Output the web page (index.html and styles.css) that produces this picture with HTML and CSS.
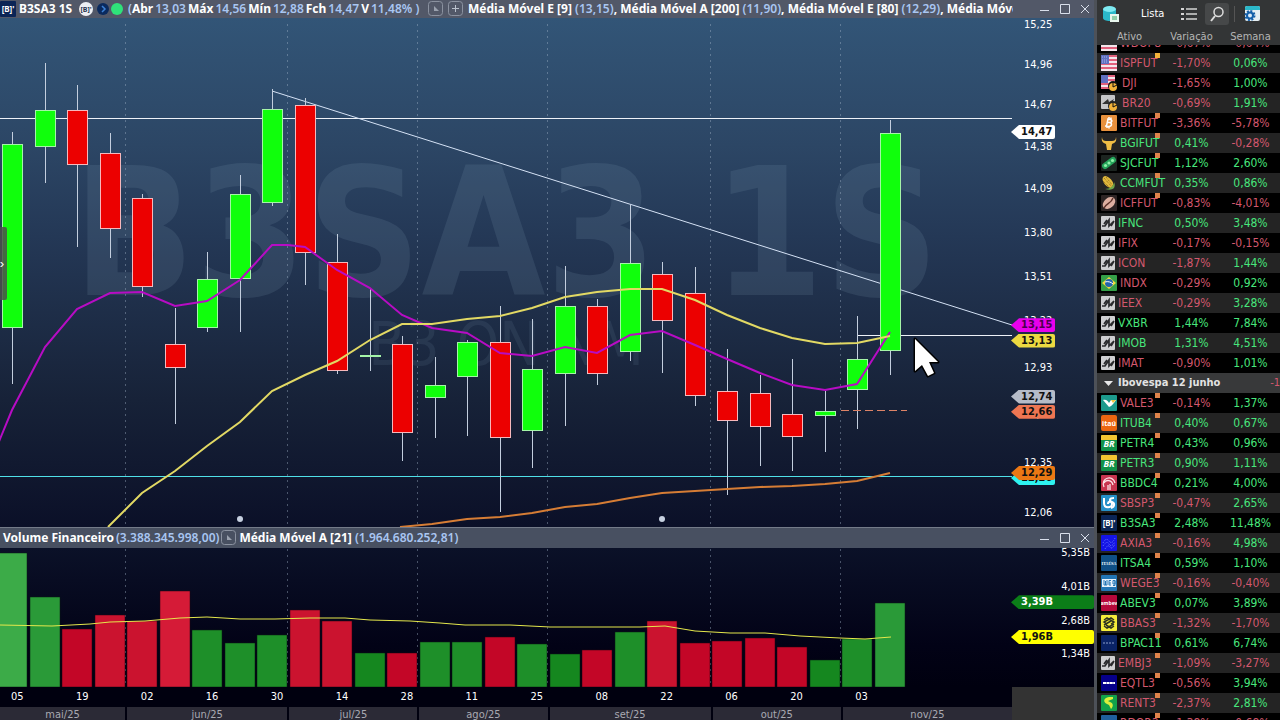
FILE: index.html
```
<!DOCTYPE html>
<html lang="pt-BR">
<head>
    <meta charset="UTF-8">
    <meta name="viewport" content="width=device-width, initial-scale=1.0">
    <title>B3SA3 1S</title>
    <link rel="stylesheet" href="styles.css">
</head>

<body>
    <!-- Ícones dos ativos -->
    <svg class="icon-defs" aria-hidden="true">
        <symbol id="i-usa" viewBox="0 0 16 16"><rect width="16" height="16" fill="#f3e6ec"/><path d="M0 1h16M0 5h16M0 9h16M0 13h16" stroke="#e0607c" stroke-width="2"/><rect width="8" height="9" fill="#5f6fc0"/><path d="M1 2h6M1 5h6M1 7h6" stroke="#a9b5ea" stroke-dasharray="1 1"/></symbol>
        <symbol id="i-dji" viewBox="0 0 16 16"><rect width="14" height="14" fill="#f3e6ec"/><path d="M0 1h14M0 5h14M0 9h14M0 13h14" stroke="#e0607c" stroke-width="2"/><rect width="7" height="8" fill="#5f6fc0"/><circle cx="12" cy="11" r="5" fill="#111"/><circle cx="12" cy="12" r="4" fill="#f2b23a"/><path d="M12 8v4l4-2" stroke="#111" fill="none"/></symbol>
        <symbol id="i-br20" viewBox="0 0 16 16"><rect width="14" height="14" rx="1" fill="#c6c6c8"/><path d="M1 9l6-5 1 3 5-3-3 6-3-1z" fill="#333"/><circle cx="12" cy="11" r="5" fill="#222"/><circle cx="12" cy="12" r="4" fill="#f2b23a"/><path d="M12 8v4l4-2" stroke="#111" fill="none"/></symbol>
        <symbol id="i-bit" viewBox="0 0 16 16"><rect width="16" height="16" rx="1" fill="#e8913d"/><path d="M6 4l3 .5c3 .5 2 3-.5 3 3 .5 2.500 4-.5 4l-4-.5M7 4L5.500 11M6 7.500h3M8 2v2M10 2.500v2M6 11v2M8 11.500v2" stroke="#fff" stroke-width="1.500" fill="none"/></symbol>
        <symbol id="i-bgi" viewBox="0 0 16 16"><path d="M1 2c0 3 2 4 4 4h6c2 0 4-1 4-4 1 4-1 6-4 7l-1 6H6L5 9C2 8 0 6 1 2z" fill="#f0bd45"/></symbol>
        <symbol id="i-sjc" viewBox="0 0 16 16"><rect width="16" height="16" rx="1" fill="#1c2420"/><path d="M4 11L12 5" stroke="#25a35a" stroke-width="6" stroke-linecap="round"/><circle cx="4.500" cy="10.500" r="1.600" fill="#8ff0a8"/><circle cx="8" cy="8" r="1.600" fill="#8ff0a8"/><circle cx="11.500" cy="5.500" r="1.600" fill="#8ff0a8"/></symbol>
        <symbol id="i-ccm" viewBox="0 0 16 16"><ellipse cx="7" cy="7" rx="4" ry="7" transform="rotate(-40 7 7)" fill="#e2b93c"/><path d="M3 3l8 9M5 2l7 9M2 6l7 7" stroke="#8a6a1a" stroke-dasharray="1 1"/><path d="M4 14c4 1 7 1 9-1 1-2 1-4 0-6 0 4-4 7-9 7z" fill="#6fa64a"/></symbol>
        <symbol id="i-icf" viewBox="0 0 16 16"><rect width="16" height="16" rx="1" fill="#2d2424"/><ellipse cx="8" cy="8" rx="7" ry="5" transform="rotate(-40 8 8)" fill="#dcaea0"/><path d="M3 13c2-5 7-4 9-10" stroke="#5b3028" stroke-width="1.400" fill="none"/></symbol>
        <symbol id="i-nel" viewBox="0 0 16 16"><rect y="1" width="14" height="14" rx="1" fill="#cfcfd1"/><path d="M1 11h3L8 5v6l5-5M6 5L3 9M10 11l3-5" stroke="#2b2b2d" stroke-width="1.700" fill="none"/></symbol>
        <symbol id="i-bra" viewBox="0 0 16 16"><rect width="16" height="16" rx="1" fill="#35a048"/><path d="M8 2l7 6-7 6-7-6z" fill="#f2dc3d"/><circle cx="8" cy="8" r="4" fill="#2464ad"/><path d="M4 7c3-1 6 0 8 2" stroke="#fff" fill="none"/></symbol>
        <symbol id="i-vale" viewBox="0 0 16 16"><rect width="16" height="16" rx="1" fill="#1c9a8c"/><path d="M2 5c3-1 5 1 6 3l2-3h5c-2 3-4 6-7 7z" fill="#fff"/><path d="M10 5h5l-3 3z" fill="#f0c53f"/></symbol>
        <symbol id="i-itau" viewBox="0 0 16 16"><rect width="16" height="16" rx="2" fill="#ec6611"/><text x="8" y="11" class="logo-text" font-size="7">itaú</text></symbol>
        <symbol id="i-petr" viewBox="0 0 16 16"><rect width="16" height="16" rx="1" fill="#12924a"/><path d="M0 1q0-1 1-1h14q1 0 1 1v4H0z" fill="#f4c431"/><text x="8" y="12" class="logo-text" font-size="9" font-style="italic">BR</text></symbol>
        <symbol id="i-bbdc" viewBox="0 0 16 16"><rect width="16" height="16" rx="1" fill="#c8344f"/><path d="M3 12C-1 3 12-1 14 8M3 8c2-4 8-3 9 2M7 10v5M9 9v6" stroke="#fbe3e7" stroke-width="1.300" fill="none"/></symbol>
        <symbol id="i-sbsp" viewBox="0 0 16 16"><rect width="16" height="16" rx="1" fill="#2590c8"/><path d="M3 3v5c0 6 8 5 8 1 0-3-4-3-4 0M13 3c-5 0-5 3-2 4s3 5-1 6" stroke="#fff" stroke-width="2" fill="none"/></symbol>
        <symbol id="i-b3" viewBox="0 0 16 16"><rect width="16" height="16" rx="1" fill="#0b2556"/><text x="8" y="11" class="logo-text" font-size="8">[B]'</text></symbol>
        <symbol id="i-axia" viewBox="0 0 16 16"><rect width="16" height="16" rx="1" fill="#1414e6"/><path d="M2 8q3-6 6-2t6-3M2 11q4-6 6-2t6-2M4 14q3-5 5-2t5-3" stroke="#6c7bff" stroke-dasharray="1 1" fill="none"/></symbol>
        <symbol id="i-itsa" viewBox="0 0 16 16"><rect width="16" height="16" rx="1" fill="#0f4f86"/><text x="8" y="10" class="logo-text logo-serif" font-size="4">ITAÚSA</text></symbol>
        <symbol id="i-weg" viewBox="0 0 16 16"><rect width="16" height="16" rx="1" fill="#2276b5"/><rect x="1" y="4" width="14" height="8" fill="#e6f2fb"/><path d="M3 5v5h3V5M4.500 6v4M10 5.500H8v4.500h2M8 8h2M14 5.500h-2V9h2V5.500v5h-2" stroke="#2276b5" fill="none"/></symbol>
        <symbol id="i-ambev" viewBox="0 0 16 16"><rect width="16" height="16" rx="1" fill="#b5083a"/><text x="8" y="10" class="logo-text" font-size="5">ambev</text></symbol>
        <symbol id="i-bb" viewBox="0 0 16 16"><rect width="16" height="16" rx="1" fill="#f4ec3a"/><path d="M3 5l3-2 7 4-3 2M13 5l-3-2-7 4 3 2M3 10l7-4M3 11l3 2 7-4M13 11l-3 2-5-3" stroke="#2e3320" stroke-width="1.500" fill="none"/></symbol>
        <symbol id="i-btg" viewBox="0 0 16 16"><rect width="16" height="16" rx="1" fill="#0a2366"/><path d="M2 8h12" stroke="#8b9fcb" stroke-dasharray="2 1"/></symbol>
        <symbol id="i-eqtl" viewBox="0 0 16 16"><rect width="16" height="16" rx="1" fill="#06008a"/><path d="M2 8h12" stroke="#fff" stroke-width="2" stroke-dasharray="3 .4"/></symbol>
        <symbol id="i-rent" viewBox="0 0 16 16"><rect width="16" height="16" rx="1" fill="#11a24a"/><path d="M12 2H8C2 3 2 7 6 9l2 1 2 4c3-3 2-6-1-7L7 6l5-2z" fill="#d9ee3c"/></symbol>
        <symbol id="i-rdor" viewBox="0 0 16 16"><rect width="16" height="16" rx="1" fill="#1f5f9c"/></symbol>
        <symbol id="i-min" viewBox="0 0 12 12"><path d="M1 7.500h9" stroke="#d9dfeb"/></symbol>
        <symbol id="i-max" viewBox="0 0 12 12"><path d="M1.500 1.500h9v9h-9z" stroke="#d9dfeb" fill="none"/></symbol>
        <symbol id="i-close" viewBox="0 0 12 12"><path d="M2 2l8 8M10 2l-8 8" stroke="#d9dfeb"/></symbol>
        <symbol id="i-corner" viewBox="0 0 16 16"><rect x=".5" y=".5" width="14" height="14" rx="3" stroke="#8b92a0" fill="none"/><path d="M6 5v5h5z" fill="#9aa1ae"/></symbol>
        <symbol id="i-plus" viewBox="0 0 16 16"><rect x=".5" y=".5" width="14" height="14" rx="3" stroke="#8b92a0" fill="none"/><path d="M4 7.500h7M7.500 4v7" stroke="#b9c0cc"/></symbol>
    </svg>

    <div class="app">
        <main class="chart">
            <!-- Título do gráfico de preços -->
            <header class="pane-title">
                <svg class="icon"><use href="#i-b3"/></svg>
                <strong class="symbol-name">B3SA3 1S</strong>
                <svg class="badges" viewBox="0 0 46 16" aria-hidden="true">
                    <circle cx="8" cy="8" r="7" fill="#eceff3"/><text x="8" y="11" class="logo-text logo-dark" font-size="7">[B]'</text>
                    <circle cx="25" cy="8" r="6" fill="#0a2a5e"/><path d="M24 5l3 3-3 3" stroke="#3d82d6" stroke-width="1.500" fill="none"/>
                    <circle cx="39" cy="8" r="6" fill="#2fe27a"/>
                </svg>
                <div class="ohlc"><span><i>(</i><b>Abr</b></span><i>13,03</i><b>Máx</b><i>14,56</i><b>Mín</b><i>12,88</i><b>Fch</b><i>14,47</i><b>V</b><i>11,48% )</i></div>
                <button class="mini" aria-label="Ocultar"><svg><use href="#i-corner"/></svg></button>
                <button class="mini" aria-label="Adicionar"><svg><use href="#i-plus"/></svg></button>
                <span class="studies"><b>Média Móvel E [9]</b> <i>(13,15)</i><b>, Média Móvel A [200]</b> <i>(11,90)</i><b>, Média Móvel E [80]</b> <i>(12,29)</i><b>, Média Móvel E [21]</b></span>
                <div class="window-buttons">
                    <button aria-label="Minimizar"><svg><use href="#i-min"/></svg></button>
                    <button aria-label="Maximizar"><svg><use href="#i-max"/></svg></button>
                    <button aria-label="Fechar"><svg><use href="#i-close"/></svg></button>
                </div>
            </header>

            <!-- Preços -->
            <section class="price-pane">
                <div class="plot">
                    <div class="watermark"><span class="wm-code">B3SA3 1S</span><span class="wm-name">B3 ON NM</span></div>
                    <svg class="drawing" viewBox="0 18 1012 509" preserveAspectRatio="none">
                        <path class="grid-line" d="M125.500 24V525M287.500 24V525M417.500 24V525M547.500 24V525M710.500 24V525M840.500 24V525"/>
                        <path class="level" d="M0 118.500H1012M857 335.500H1012"/>
                        <path class="trend" d="M272 91L1012 325"/>
                        <path class="support" d="M0 476.500H1012"/>
                        <path class="wick" d="M12.500 132V384M45.500 63V183M77.500 85V247M110.500 133V258M142.500 194V297M175.500 308V424M207.500 252V332M240.500 175V332M272.500 89V206M305.500 98V285M337.500 234V374M370.500 288V371M402.500 336V461M435.500 357V438M467.500 340V436M500.500 306V512M532.500 319V468M565.500 266V426M597.500 299V385M630.500 205V361M662.500 262V373M695.500 267V406M727.500 349V495M760.500 375V466M792.500 359V471M825.500 391V452M857.500 316V429M890.500 120V375"/>
                        <g class="up">
                            <rect x="2.500" y="144.500" width="20" height="183"/>
                            <rect x="35.500" y="110.500" width="20" height="36"/>
                            <rect x="197.500" y="279.500" width="20" height="48"/>
                            <rect x="230.500" y="194.500" width="20" height="84"/>
                            <rect x="262.500" y="109.500" width="20" height="93"/>
                            <rect x="360.500" y="355.500" width="20" height="1"/>
                            <rect x="425.500" y="385.500" width="20" height="12"/>
                            <rect x="457.500" y="342.500" width="20" height="34"/>
                            <rect x="522.500" y="369.500" width="20" height="61"/>
                            <rect x="555.500" y="306.500" width="20" height="67"/>
                            <rect x="620.500" y="263.500" width="20" height="88"/>
                            <rect x="815.500" y="411.500" width="20" height="4"/>
                            <rect x="847.500" y="359.500" width="20" height="30"/>
                            <rect x="880.500" y="133.500" width="20" height="217"/>
                        </g>
                        <g class="down">
                            <rect x="67.500" y="110.500" width="20" height="54"/>
                            <rect x="100.500" y="153.500" width="20" height="75"/>
                            <rect x="132.500" y="198.500" width="20" height="88"/>
                            <rect x="165.500" y="344.500" width="20" height="23"/>
                            <rect x="295.500" y="105.500" width="20" height="147"/>
                            <rect x="327.500" y="262.500" width="20" height="108"/>
                            <rect x="392.500" y="344.500" width="20" height="88"/>
                            <rect x="490.500" y="342.500" width="20" height="95"/>
                            <rect x="587.500" y="306.500" width="20" height="67"/>
                            <rect x="652.500" y="274.500" width="20" height="46"/>
                            <rect x="685.500" y="293.500" width="20" height="102"/>
                            <rect x="717.500" y="391.500" width="20" height="29"/>
                            <rect x="750.500" y="393.500" width="20" height="33"/>
                            <rect x="782.500" y="414.500" width="20" height="22"/>
                        </g>
                        <path class="stop" d="M841 410.500H907"/>
                        <polyline class="ma200" points="400,527 432,524 467,519 500,517 532,513 565,507 597,504 630,498 662,493 695,491 727,489 760,487 792,486 825,484 857,481 890,473"/>
                        <polyline class="ma9" points="-2,444 0,439 12,410 45,347 77,309 110,293 142,292 175,306 207,301 240,280 272,245 288,245 305,247 337,270 370,288 402,315 432,328 467,333 500,353 532,356 565,347 597,353 630,335 662,331 695,345 727,359 760,373 792,385 825,390 857,384 890,332"/>
                        <polyline class="ma80" points="108,527 142,493 175,471 207,446 240,422 272,391 305,375 337,361 370,340 402,324 432,324 467,319 500,316 532,308 565,297 597,292 630,289 662,289 695,300 727,315 760,328 792,338 825,344 857,343 890,336"/>
                        <circle cx="240" cy="519" r="3" fill="#c6d0e0"/>
                        <circle cx="662" cy="519" r="3" fill="#c6d0e0"/>
                        <path class="pointer" d="M915 339V371L922 365L928 376L934 373L929 362H938Z"/>
                    </svg>
                    <button class="side-handle" aria-label="Expandir">›</button>
                </div>
                <div class="price-axis">
                    <span>15,25</span><span>14,96</span><span>14,67</span><span>14,38</span><span>14,09</span><span>13,80</span><span>13,51</span><span>13,22</span><span>12,93</span><span>12,64</span><span>12,35</span><span>12,06</span>
                    <b class="tag tag-last">14,47</b>
                    <b class="tag tag-ma9">13,15</b>
                    <b class="tag tag-ma80">13,13</b>
                    <b class="tag tag-gray">12,74</b>
                    <b class="tag tag-stop">12,66</b>
                    <b class="tag tag-support">12,26</b>
                    <b class="tag tag-ma200">12,29</b>
                </div>
            </section>

            <!-- Volume -->
            <header class="pane-title volume-title">
                <div class="volume-name"><b>Volume Financeiro</b><i>(3.388.345.998,00)</i></div>
                <button class="mini" aria-label="Ocultar"><svg><use href="#i-corner"/></svg></button>
                <span class="studies"><b>Média Móvel A [21]</b> <i>(1.964.680.252,81)</i></span>
                <div class="window-buttons">
                    <button aria-label="Minimizar"><svg><use href="#i-min"/></svg></button>
                    <button aria-label="Maximizar"><svg><use href="#i-max"/></svg></button>
                    <button aria-label="Fechar"><svg><use href="#i-close"/></svg></button>
                </div>
            </header>
            <section class="volume-pane">
                <svg class="drawing" viewBox="0 548 1012 139" preserveAspectRatio="none">
                    <path class="grid-line" d="M125.500 549V687M287.500 549V687M417.500 549V687M547.500 549V687M710.500 549V687M840.500 549V687"/>
                    <g stroke="#07200f" stroke-opacity=".5">
                        <path fill="#3cab48" d="M-3 553H27V687H-3z"/>
                        <path fill="#2a9a38" d="M30 597H60V687H30zM875 603H905V687H875z"/>
                        <path fill="#1e8f29" d="M192 630H222V687H192zM225 643H255V687H225zM257 635H287V687H257zM420 642H450V687H420zM452 642H482V687H452zM517 644H547V687H517zM615 632H645V687H615zM842 639H872V687H842z"/>
                        <path fill="#15871f" d="M355 653H385V687H355zM550 654H580V687H550zM810 660H840V687H810z"/>
                    </g>
                    <g stroke="#2a0410" stroke-opacity=".5">
                        <path fill="#d51b37" d="M160 591H190V687H160z"/>
                        <path fill="#cb132f" d="M95 615H125V687H95zM127 621H157V687H127zM290 610H320V687H290zM322 621H352V687H322zM647 621H677V687H647z"/>
                        <path fill="#c30627" d="M62 629H92V687H62zM387 653H417V687H387zM485 637H515V687H485zM582 650H612V687H582zM680 643H710V687H680zM712 641H742V687H712zM745 638H775V687H745zM777 647H807V687H777z"/>
                    </g>
                    <polyline class="volume-ma" points="0,625 52,626 90,624 110,622 145,621 180,618 207,617 240,619 275,619 310,618 345,618 370,620 410,621 440,623 465,625 510,625 550,627 640,627 665,626 695,631 730,633 765,633 800,636 840,638 865,639 891,637"/>
                </svg>
                <div class="volume-axis">
                    <span>5,35B</span><span>4,01B</span><span>2,68B</span><span>1,34B</span>
                    <b class="tag tag-volume">3,39B</b>
                    <b class="tag tag-volume-ma">1,96B</b>
                </div>
            </section>

            <!-- Eixo de datas -->
            <footer class="time-axis">
                <div class="days">
                    <span>05</span><span>19</span><span>02</span><span>16</span><span>30</span><span>14</span><span>28</span><span>11</span><span>25</span><span>08</span><span>22</span><span>06</span><span>20</span><span>03</span>
                </div>
                <div class="months">
                    <span>mai/25</span><span>jun/25</span><span>jul/25</span><span>ago/25</span><span>set/25</span><span>out/25</span><span>nov/25</span>
                </div>
            </footer>
        </main>

        <!-- Lista de ativos -->
        <aside class="watchlist">
            <div class="toolbar">
                <svg class="db-icon" viewBox="0 0 18 18" aria-hidden="true"><path d="M1 4v9c0 4 13 4 13 0V4z" fill="#2bb8c9"/><ellipse cx="7.500" cy="4" rx="6.500" ry="3" fill="#7eeaf2"/><rect x="8" y="9" width="9" height="8" fill="#e9f7ef"/><path d="M10 12h5M10 14h5" stroke="#36a665"/></svg>
                <span class="list-name">Lista</span>
                <button aria-label="Listas"><svg viewBox="0 0 16 14"><path d="M5 2h11M5 7h11M5 12h11" stroke="#d5d5d5" stroke-width="1.500"/><path d="M0 2h3M0 7h3M0 12h3" stroke="#d5d5d5" stroke-width="2"/></svg></button>
                <button class="search" aria-label="Buscar"><svg viewBox="0 0 16 16"><circle cx="9.500" cy="6" r="4.500" stroke="#ddd" stroke-width="1.500" fill="none"/><path d="M6 10l-4 5" stroke="#ddd" stroke-width="2"/></svg></button>
                <button class="settings" aria-label="Configurar"><svg viewBox="0 0 16 16"><rect x="1" width="15" height="15" rx="2" fill="#e6eef2"/><path d="M1 4V2q0-2 2-2h11q2 0 2 2v2z" fill="#2bb8c9"/><circle cx="6" cy="9.500" r="4" fill="#155fa8"/><circle cx="6" cy="9.500" r="4.500" fill="none" stroke="#155fa8" stroke-width="2" stroke-dasharray="2 1.500"/><circle cx="6" cy="9.500" r="2" fill="#dbeaf7"/></svg></button>
            </div>
            <table>
                <thead><tr><th>Ativo</th><th>Variação</th><th>Semana</th></tr></thead>
                <tbody>
                    <tr class="cut"><td class="fall"><div><svg><use href="#i-usa"/></svg>WDOFUT</div></td><td class="fall"><div>-0,67%</div></td><td class="fall"><div>-0,64%</div></td></tr>
                    <tr><td class="fall mark gold"><svg><use href="#i-usa"/></svg>ISPFUT</td><td class="fall">-1,70%</td><td class="rise">0,06%</td></tr>
                    <tr><td class="fall wide"><svg><use href="#i-dji"/></svg>DJI</td><td class="fall">-1,65%</td><td class="rise">1,00%</td></tr>
                    <tr><td class="fall wide"><svg><use href="#i-br20"/></svg>BR20</td><td class="fall">-0,69%</td><td class="rise">1,91%</td></tr>
                    <tr><td class="fall mark"><svg><use href="#i-bit"/></svg>BITFUT</td><td class="fall">-3,36%</td><td class="fall">-5,78%</td></tr>
                    <tr><td class="rise mark"><svg><use href="#i-bgi"/></svg>BGIFUT</td><td class="rise">0,41%</td><td class="fall">-0,28%</td></tr>
                    <tr><td class="rise mark"><svg><use href="#i-sjc"/></svg>SJCFUT</td><td class="rise">1,12%</td><td class="rise">2,60%</td></tr>
                    <tr><td class="rise mark"><svg><use href="#i-ccm"/></svg>CCMFUT</td><td class="rise">0,35%</td><td class="rise">0,86%</td></tr>
                    <tr><td class="fall mark"><svg><use href="#i-icf"/></svg>ICFFUT</td><td class="fall">-0,83%</td><td class="fall">-4,01%</td></tr>
                    <tr><td class="rise slim"><svg><use href="#i-nel"/></svg>IFNC</td><td class="rise">0,50%</td><td class="rise">3,48%</td></tr>
                    <tr><td class="fall slim"><svg><use href="#i-nel"/></svg>IFIX</td><td class="fall">-0,17%</td><td class="fall">-0,15%</td></tr>
                    <tr><td class="fall slim"><svg><use href="#i-nel"/></svg>ICON</td><td class="fall">-1,87%</td><td class="rise">1,44%</td></tr>
                    <tr><td class="fall"><svg><use href="#i-bra"/></svg>INDX</td><td class="fall">-0,29%</td><td class="rise">0,92%</td></tr>
                    <tr><td class="fall slim"><svg><use href="#i-nel"/></svg>IEEX</td><td class="fall">-0,29%</td><td class="rise">3,28%</td></tr>
                    <tr><td class="rise slim"><svg><use href="#i-nel"/></svg>VXBR</td><td class="rise">1,44%</td><td class="rise">7,84%</td></tr>
                    <tr><td class="rise slim"><svg><use href="#i-nel"/></svg>IMOB</td><td class="rise">1,31%</td><td class="rise">4,51%</td></tr>
                    <tr><td class="fall slim"><svg><use href="#i-nel"/></svg>IMAT</td><td class="fall">-0,90%</td><td class="rise">1,01%</td></tr>
                    <tr class="group"><td colspan="3"><div><svg viewBox="0 0 16 16"><path d="M3 6h9l-4.500 5z" fill="#e8e8e8"/></svg>Ibovespa 12 junho<span class="fall">-1</span></div></td></tr>
                    <tr><td class="fall mark"><svg><use href="#i-vale"/></svg>VALE3</td><td class="fall">-0,14%</td><td class="rise">1,37%</td></tr>
                    <tr><td class="rise mark"><svg><use href="#i-itau"/></svg>ITUB4</td><td class="rise">0,40%</td><td class="rise">0,67%</td></tr>
                    <tr><td class="rise mark"><svg><use href="#i-petr"/></svg>PETR4</td><td class="rise">0,43%</td><td class="rise">0,96%</td></tr>
                    <tr><td class="rise mark"><svg><use href="#i-petr"/></svg>PETR3</td><td class="rise">0,90%</td><td class="rise">1,11%</td></tr>
                    <tr><td class="rise mark"><svg><use href="#i-bbdc"/></svg>BBDC4</td><td class="rise">0,21%</td><td class="rise">4,00%</td></tr>
                    <tr><td class="fall mark"><svg><use href="#i-sbsp"/></svg>SBSP3</td><td class="fall">-0,47%</td><td class="rise">2,65%</td></tr>
                    <tr><td class="rise mark"><svg><use href="#i-b3"/></svg>B3SA3</td><td class="rise">2,48%</td><td class="rise">11,48%</td></tr>
                    <tr><td class="fall mark"><svg><use href="#i-axia"/></svg>AXIA3</td><td class="fall">-0,16%</td><td class="rise">4,98%</td></tr>
                    <tr><td class="rise mark"><svg><use href="#i-itsa"/></svg>ITSA4</td><td class="rise">0,59%</td><td class="rise">1,10%</td></tr>
                    <tr><td class="fall mark"><svg><use href="#i-weg"/></svg>WEGE3</td><td class="fall">-0,16%</td><td class="fall">-0,40%</td></tr>
                    <tr><td class="rise mark"><svg><use href="#i-ambev"/></svg>ABEV3</td><td class="rise">0,07%</td><td class="rise">3,89%</td></tr>
                    <tr><td class="fall mark"><svg><use href="#i-bb"/></svg>BBAS3</td><td class="fall">-1,32%</td><td class="fall">-1,70%</td></tr>
                    <tr><td class="rise mark"><svg><use href="#i-btg"/></svg>BPAC11</td><td class="rise">0,61%</td><td class="rise">6,74%</td></tr>
                    <tr><td class="fall mark slim"><svg><use href="#i-nel"/></svg>EMBJ3</td><td class="fall">-1,09%</td><td class="fall">-3,27%</td></tr>
                    <tr><td class="fall mark"><svg><use href="#i-eqtl"/></svg>EQTL3</td><td class="fall">-0,56%</td><td class="rise">3,94%</td></tr>
                    <tr><td class="fall mark"><svg><use href="#i-rent"/></svg>RENT3</td><td class="fall">-2,37%</td><td class="rise">2,81%</td></tr>
                    <tr><td class="fall mark"><svg><use href="#i-rdor"/></svg>RDOR3</td><td class="fall">-1,38%</td><td class="fall">-0,68%</td></tr>
                </tbody>
            </table>
        </aside>
    </div>
</body>
</html>
```
FILE: styles.css
```
* {
    box-sizing: border-box;
}

body {
    margin: 0;
    background-color: #000;
    color: #fff;
    font-family: "DejaVu Sans Condensed", "DejaVu Sans", sans-serif;
    font-size: 12px;
    overflow: hidden;
}

button {
    padding: 0;
    border: none;
    background: none;
    color: inherit;
    cursor: pointer;
}

svg {
    display: block;
    flex: none;
}

i {
    font-style: normal;
}

.icon-defs {
    position: absolute;
    width: 0;
    height: 0;
}

.logo-text {
    fill: #fff;
    font-family: "Noto Sans", sans-serif;
    font-weight: bold;
    text-anchor: middle;
}

.logo-dark {
    fill: #26344f;
}

.logo-serif {
    font-family: "Liberation Serif", serif;
}

.app {
    display: grid;
    grid-template-columns: minmax(0, 1fr) 183px;
    height: 100vh;
}

/* Gráfico */
.chart {
    display: grid;
    grid-template-rows: 18px minmax(0, 509fr) 21px minmax(0, 139fr) 33px;
    min-width: 0;
    border-right: 3px solid #4d5158;
}

.pane-title {
    display: flex;
    align-items: center;
    min-width: 0;
    background-color: #525868;
    font-family: "Noto Sans", sans-serif;
    font-size: 12px;
    line-height: 16px;
    white-space: pre;
}

.pane-title i {
    color: #a9c6f2;
    font-weight: 600;
}

.pane-title .icon {
    width: 16px;
    height: 16px;
}

.symbol-name {
    width: 59px;
    margin-left: 3px;
}

.badges {
    width: 46px;
    height: 16px;
}

.ohlc {
    display: flex;
    gap: 2px;
    width: 300px;
    margin-left: 4px;
}

.mini,
.mini svg {
    width: 16px;
    height: 16px;
}

.mini {
    margin-right: 4px;
}

.studies {
    flex: 1;
    min-width: 0;
    overflow: hidden;
}

.window-buttons {
    display: flex;
    gap: 8px;
    margin-left: 26px;
    padding-right: 3px;
}

.window-buttons svg {
    width: 12px;
    height: 12px;
}

.volume-title {
    padding-left: 3px;
    border-top: 1px solid #747b89;
    background-color: #485061;
}

.volume-name {
    display: flex;
    gap: 2px;
}

.volume-title .mini {
    margin: 0 2px;
}

.price-pane,
.volume-pane {
    display: grid;
    grid-template-columns: minmax(0, 1fr) 82px;
    min-height: 0;
}

.price-pane {
    background: linear-gradient(#325577, #2c4665 25%, #243856 43%, #172238 75%, #0b1028);
}

.volume-pane {
    background: linear-gradient(#0b1128, #020216 70%, #00000f);
}

.plot {
    position: relative;
    min-height: 0;
}

.drawing {
    position: relative;
    width: 100%;
    height: 100%;
    min-height: 0;
}

.watermark {
    position: absolute;
    inset: 0;
    display: flex;
    flex-direction: column;
    align-items: center;
    padding-top: 136px;
    color: #7e9bb2;
    white-space: nowrap;
}

.wm-code {
    font-size: 178px;
    font-weight: bold;
    line-height: 160px;
    opacity: 0.16;
}

.wm-name {
    font-size: 60px;
    line-height: 60px;
    opacity: 0.12;
}

.grid-line {
    stroke: #a8b8cc;
    stroke-opacity: 0.4;
    stroke-dasharray: 2 4;
}

.level {
    stroke: #eef2f8;
}

.trend {
    stroke: #d5e2f5;
}

.support {
    stroke: #4fe0e8;
}

.stop {
    stroke: #dd8367;
    stroke-dasharray: 8 4;
}

.wick {
    stroke: #c3cede;
}

.up rect {
    fill: #10ff0c;
    stroke: #a5f5a8;
}

.down rect {
    fill: #ec0000;
    stroke: #f6b8bc;
}

.ma9,
.ma80,
.ma200,
.volume-ma {
    fill: none;
    stroke-width: 2;
}

.ma9 {
    stroke: #b70cc4;
}

.ma80 {
    stroke: #e2d964;
}

.ma200 {
    stroke: #d67d35;
}

.volume-ma {
    stroke: #e5e84c;
    stroke-width: 1;
}

.pointer {
    fill: #fff;
    stroke: #000;
    stroke-width: 3;
    stroke-linejoin: round;
    paint-order: stroke;
}

.side-handle {
    position: absolute;
    top: 41%;
    left: 0;
    width: 7px;
    height: 73px;
    border-radius: 0 2px 2px 0;
    background-color: rgba(75, 80, 75, 0.85);
    text-indent: -3px;
}

/* Eixos */
.price-axis,
.volume-axis {
    position: relative;
    display: grid;
    min-height: 0;
    font-size: 11px;
}

.price-axis {
    grid-template-rows: 40fr 40fr 42fr 42fr 44fr 44fr 44fr 47fr 47fr 48fr 50fr 21fr;
    padding-left: 12px;
    line-height: 14px;
}

.volume-axis {
    grid-template-rows: 34fr 34fr 33fr 38fr;
    padding-right: 4px;
    line-height: 10px;
    text-align: right;
}

.tag {
    position: absolute;
    left: -1px;
    width: 44px;
    height: 14px;
    padding-left: 10px;
    border-radius: 0 2px 2px 0;
    clip-path: polygon(0 50%, 8px 0, 100% 0, 100% 100%, 8px 100%);
    line-height: 14px;
    color: #111;
    text-align: left;
}

.tag-last { top: 21%; background-color: #fff; }
.tag-ma9 { top: 59%; background-color: #e800ec; color: #4a004c; }
.tag-ma80 { top: 62%; background-color: #ecd941; }
.tag-gray { top: 73%; background-color: #b6bcc8; }
.tag-stop { top: 76%; background-color: #ee7652; }
.tag-support { top: 89%; background-color: #2ef2f0; }
.tag-ma200 { top: 88%; background-color: #ec7814; }

.tag-volume,
.tag-volume-ma {
    width: 83px;
}

.tag-volume { top: 34%; background-color: #0b7d18; color: #fff; }
.tag-volume-ma { top: 59%; background-color: #ffff00; }

.time-axis {
    display: grid;
    grid-template-rows: 20px 13px;
    padding-right: 82px;
    background: linear-gradient(to left, #333 82px, #00000f 82px);
    overflow: hidden;
}

.days {
    display: grid;
    grid-template-columns: repeat(14, 65fr) 92fr;
    padding-left: 11px;
    line-height: 19px;
    font-size: 11px;
}

.months {
    display: grid;
    grid-template-columns: 125fr 160fr 128fr 128fr 161fr 128fr 169fr;
    gap: 2px;
    line-height: 15px;
    font-size: 11px;
    color: #a9a9b2;
    text-align: center;
}

.months span {
    background-color: #2b2a36;
}

/* Lista */
.watchlist {
    min-height: 0;
    overflow: hidden;
    background-color: #000;
}

.toolbar {
    display: flex;
    align-items: center;
    height: 27px;
    padding-left: 5px;
    background-color: #333536;
}

.db-icon {
    width: 18px;
    height: 18px;
}

.list-name {
    width: 40px;
    margin-left: 21px;
    font-size: 11px;
}

.toolbar button svg {
    width: 16px;
    height: 16px;
}

.toolbar .search {
    margin: 0 5px 0 8px;
    padding: 3px 4px;
    border-radius: 3px;
    background-color: #464849;
}

.toolbar .settings {
    padding-left: 9px;
    border-left: 1px solid #555;
}

table {
    width: 100%;
    table-layout: fixed;
    border-collapse: collapse;
}

th {
    height: 18px;
    padding: 0;
    background-color: #333536;
    color: #b5b5b5;
    font-size: 11px;
    font-weight: normal;
}

th:first-child {
    width: 65px;
}

td {
    height: 20px;
    padding: 0;
    line-height: 20px;
    text-align: center;
    white-space: nowrap;
}

tr:nth-child(even) td {
    background-color: #242424;
}

td:first-child {
    padding-left: 4px;
    text-align: left;
}

td svg {
    float: left;
    width: 16px;
    height: 16px;
    margin: 2px 3px 2px 0;
}

.slim svg {
    margin-right: 1px;
}

.wide svg {
    margin-right: 5px;
}

.rise {
    color: #48e67c;
}

.fall {
    color: #d3586e;
}

.mark {
    background-image: linear-gradient(#e0834a, #e0834a);
    background-repeat: no-repeat;
    background-position: 58px 0;
    background-size: 5px 5px;
}

.gold {
    background-image: linear-gradient(#f2b23a, #f2b23a);
}

.cut td {
    height: 8px;
    line-height: 8px;
}

.cut div {
    display: flex;
    align-items: flex-end;
    justify-content: center;
    height: 8px;
    overflow: hidden;
    line-height: 20px;
}

.cut td:first-child div {
    justify-content: flex-start;
}

tr.group td {
    background-color: #38393a;
    font-size: 11px;
    font-weight: bold;
    color: #e3e3e3;
}

.group div {
    display: flex;
}

.group svg {
    margin-right: 1px;
}

.group span {
    margin-left: auto;
    font-weight: normal;
}
```
